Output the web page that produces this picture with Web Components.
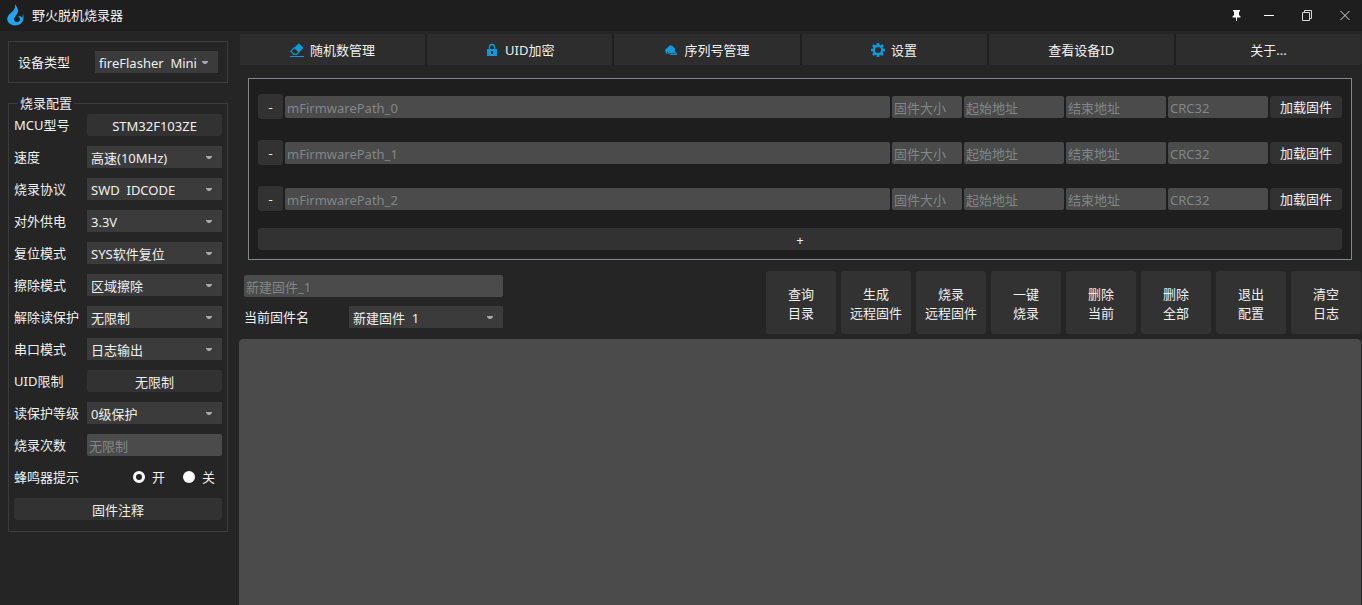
<!DOCTYPE html>
<html lang="zh-CN">
<head>
<meta charset="utf-8">
<title>野火脱机烧录器</title>
<style>
  html, body { height: 100%; }
  body {
    margin: 0; background: #252525; color: #f0f0f0;
    font: 13px/20px "Noto Sans", "Noto Sans CJK SC", sans-serif;
    --button: #323232; --combo: #3b3b3b; --field: #4b4b4b; --line: #3c3c3c; --hint: #7f8787;
  }
</style>
</head>
<body>
<flasher-app></flasher-app>
<script>
const base = `*{box-sizing:border-box} button,input,select{font:inherit;color:inherit;margin:0;outline:0}`;
const define = (name, css, html) => customElements.define(name, class extends HTMLElement {
  constructor() {
    super();
    const t = document.createElement('template');
    const body = typeof html === 'function' ? html(this) : html;
    t.innerHTML = `<style>${base}${css}</style>${body}`;
    this.attachShadow({ mode: 'open' }).append(t.content.cloneNode(true));
  }
});

define('ui-button', `
  :host{display:block;height:22px}
  button{display:block;width:100%;height:100%;padding:2px 0 0;border:0;border-radius:3px;background:var(--button);line-height:19px;text-align:center;white-space:nowrap}
`, `<button type="button"><slot></slot></button>`);

define('ui-field', `
  :host{display:block;height:22px;min-width:0}
  input{display:block;width:100%;height:100%;padding:2px 2px 0;border:0;border-radius:2px;background:var(--field)}
  input::placeholder{color:var(--hint);opacity:1}
`, el => `<input type="text" placeholder="${el.getAttribute('hint')}" aria-label="${el.getAttribute('label') || el.getAttribute('hint')}">`);

define('ui-combo', `
  :host{display:block;position:relative;height:22px}
  select{display:block;appearance:none;width:100%;height:100%;padding:2px 20px 0 4px;border:0;border-radius:0;background:var(--combo)}
  svg{position:absolute;right:9px;top:9px;width:8px;height:5px;pointer-events:none}
`, el => `<select aria-label="${el.getAttribute('label')}"><option>${el.getAttribute('value')}</option></select>
  <svg viewBox="0 0 8 5" aria-hidden="true"><path d="M1 1h6v1L5 4H3L1 2z" fill="#a8a8a8"/></svg>`);

define('config-row', `
  :host{display:flex;align-items:center;height:22px;white-space:nowrap}
  span{flex:1 1 0;min-width:0;overflow:visible}
  div{width:135px}
`, el => `<span>${el.getAttribute('label')}</span><div><slot></slot></div>`);

define('ui-radio', `
  :host{display:block}
  label{display:flex;align-items:center;gap:7px}
  input{appearance:none;width:12px;height:12px;border-radius:50%;background:#fff}
  input:checked{background:#252525;border:3px solid #fff}
`, el => `<label><input type="radio" ${el.hasAttribute('checked') ? 'checked' : ''}><slot></slot></label>`);

define('title-bar', `
  :host{display:flex;align-items:center;height:31px;padding:0 2px 2px 4px;background:#1e1e1e}
  .logo{width:22px;height:22px;margin-right:6px}
  h1{flex:1;margin:0;font-size:13px;font-weight:400}
  nav{display:flex}
  button{display:flex;align-items:center;justify-content:center;width:30px;height:28px;padding:0;border:0;background:none}
  button+button{margin-left:8px}
  button:nth-child(2){margin-left:3px}
  nav svg{width:14px;height:14px}
`, `<svg class="logo" viewBox="0 0 22 22" aria-hidden="true"><path d="M11 0C15 5 14.500 8.500 12.200 11.200C10.400 13.300 9.500 15 10.500 17C12 19 15.500 18.300 16 16C16.400 14 15 12.800 13.600 13.200C15 11.500 17.500 12 18 14C18.800 12.800 19 11.500 18.800 9.500C20.300 13.500 19.600 17.500 16.500 19.800C13 22.300 7.500 21.800 4.800 18.800C2 15.500 3.200 12 6.500 9.300C10 6.400 11.800 4 11 0Z" fill="#22a4ee"/></svg>
  <h1>野火脱机烧录器</h1>
  <nav>
    <button type="button" aria-label="置顶"><svg viewBox="0 0 14 14"><path d="M4 2h7v1.500H10V7l1.500 1.500V9.500H8V13H7V9.500H3.500v-1L5 7V3.500H4z" fill="#fff"/></svg></button>
    <button type="button" aria-label="最小化"><svg viewBox="0 0 14 14"><path d="M2 7.500h10" stroke="#fff"/></svg></button>
    <button type="button" aria-label="还原"><svg viewBox="0 0 14 14"><path d="M2.500 4.500h7v8h-7zM4.500 4.500v-2h7v8h-2" fill="none" stroke="#d8d8d8"/></svg></button>
    <button type="button" aria-label="关闭"><svg viewBox="0 0 14 14"><path d="M2.500 3l9 9m0-9l-9 9" stroke="#d8d8d8"/></svg></button>
  </nav>`);

const icons = {
  eraser: `<path d="M4.500 4.500L0.800 8.200L4 11.400H6.500L10 8" fill="none" stroke="#0a9bdc" stroke-width="1.100"/><path d="M4 5L8.800 0.300L13.500 4.800L8.800 9.500z" fill="#0a9bdc"/><path d="M0 13.500h14" stroke="#0a9bdc"/>`,
  lock: `<path d="M4.500 6V4a2.500 2.500 0 0 1 5 0v2" fill="none" stroke="#0a9bdc" stroke-width="1.300"/><path d="M2 6h10v7H2z" fill="#0a9bdc"/><path d="M7 8v3" stroke="#252525" stroke-width="2"/>`,
  serial: `<path d="M1 7L5.500 2.500H8L11 5.500V8.500L13 10.500V12H7L4 10.500H2z" fill="#0a9bdc"/><path d="M3 9l2 1.500h7" fill="none" stroke="#2d2d2d" stroke-dasharray="2 1"/>`,
  gear: `<g fill="none" stroke="#0a9bdc"><circle cx="7" cy="7" r="4.200" stroke-width="2.400"/><path d="M7 0v2.500M7 11.500V14M0 7h2.500M11.500 7H14M2 2l2 2M10 10l2 2M12 2l-2 2M4 10l-2 2" stroke-width="2.600"/></g>`
};
define('tab-button', `
  :host{display:block;flex:1 1 0;min-width:0}
  button{display:flex;align-items:center;justify-content:center;gap:6px;width:100%;height:31px;padding:0;border:0;background:#2d2d2d}
  svg{width:14px;height:14px}
`, el => `<button type="button">${el.getAttribute('icon') ? `<svg viewBox="0 0 14 14" aria-hidden="true">${icons[el.getAttribute('icon')]}</svg>` : ''}<span><slot></slot></span></button>`);

define('firmware-row', `
  :host{display:grid;grid-template-columns:25px minmax(0,1fr) 70px 100px 100px 100px 72px;gap:2px;align-items:center}
  .minus{height:25px}
`, el => `<ui-button class="minus">-</ui-button><ui-field hint="mFirmwarePath_${el.getAttribute('index')}"></ui-field><ui-field hint="固件大小"></ui-field><ui-field hint="起始地址"></ui-field><ui-field hint="结束地址"></ui-field><ui-field hint="CRC32"></ui-field><ui-button>加载固件</ui-button>`);

define('side-bar', `
  :host{display:block}
  .device{display:flex;align-items:center;justify-content:space-between;height:42px;padding:0 9px;border:1px solid var(--line)}
  .device ui-combo{width:123px}
  fieldset{display:flex;flex-direction:column;gap:10px;min-width:0;margin:10px 0 0;padding:1px 5px 11px;border:1px solid var(--line)}
  legend{margin-left:4px;padding:0 2px;line-height:20px}
  .radios{display:flex;gap:18px;justify-content:flex-end;padding-right:7px}
`, `<div class="device"><span>设备类型</span><ui-combo label="设备类型" value="fireFlasher&amp;nbsp; Mini"></ui-combo></div>
  <fieldset><legend>烧录配置</legend>
    <config-row label="MCU型号"><ui-button>STM32F103ZE</ui-button></config-row>
    <config-row label="速度"><ui-combo label="速度" value="高速(10MHz)"></ui-combo></config-row>
    <config-row label="烧录协议"><ui-combo label="烧录协议" value="SWD&amp;nbsp; IDCODE"></ui-combo></config-row>
    <config-row label="对外供电"><ui-combo label="对外供电" value="3.3V"></ui-combo></config-row>
    <config-row label="复位模式"><ui-combo label="复位模式" value="SYS软件复位"></ui-combo></config-row>
    <config-row label="擦除模式"><ui-combo label="擦除模式" value="区域擦除"></ui-combo></config-row>
    <config-row label="解除读保护"><ui-combo label="解除读保护" value="无限制"></ui-combo></config-row>
    <config-row label="串口模式"><ui-combo label="串口模式" value="日志输出"></ui-combo></config-row>
    <config-row label="UID限制"><ui-button>无限制</ui-button></config-row>
    <config-row label="读保护等级"><ui-combo label="读保护等级" value="0级保护"></ui-combo></config-row>
    <config-row label="烧录次数"><ui-field label="烧录次数" hint="无限制"></ui-field></config-row>
    <config-row label="蜂鸣器提示"><div class="radios"><ui-radio checked>开</ui-radio><ui-radio>关</ui-radio></div></config-row>
    <ui-button>固件注释</ui-button>
  </fieldset>`);

define('action-bar', `
  :host{display:flex;justify-content:space-between;margin:11px 0 5px 5px}
  .name{width:259px;padding-top:4px}
  .current{display:flex;align-items:center;justify-content:space-between;margin-top:9px}
  .current ui-combo{width:154px}
  .actions{display:flex;gap:5px}
  .actions ui-button{width:70px;height:63px}
`, `<div class="name"><ui-field hint="新建固件_1"></ui-field><div class="current"><span>当前固件名</span><ui-combo label="当前固件名" value="新建固件&amp;nbsp; 1"></ui-combo></div></div>
  <div class="actions">${[['查询','目录'],['生成','远程固件'],['烧录','远程固件'],['一键','烧录'],['删除','当前'],['删除','全部'],['退出','配置'],['清空','日志']].map(a => `<ui-button>${a[0]}<br>${a[1]}</ui-button>`).join('')}</div>`);

define('work-area', `
  :host{display:flex;flex-direction:column;min-width:0}
  nav{display:flex;gap:2px;margin:3px 0 13px 1px;background:#202020}
  section{display:flex;flex-direction:column;margin:0 9px;padding:15px 9px 9px;border:1px solid #84868f;background:#1e1e1e}
  firmware-row{margin-bottom:21px}
  firmware-row:nth-of-type(3){margin-bottom:17px}
  output{display:block;flex:1;border-radius:4px 4px 0 0;background:var(--field)}
`, `<nav><tab-button icon="eraser">随机数管理</tab-button><tab-button icon="lock">UID加密</tab-button><tab-button icon="serial">序列号管理</tab-button><tab-button icon="gear">设置</tab-button><tab-button>查看设备ID</tab-button><tab-button>关于...</tab-button></nav>
  <section><firmware-row index="0"></firmware-row><firmware-row index="1"></firmware-row><firmware-row index="2"></firmware-row><ui-button>+</ui-button></section>
  <action-bar></action-bar>
  <output aria-label="日志"></output>`);

define('flasher-app', `
  :host{display:flex;flex-direction:column;min-height:100%}
  main{flex:1;display:grid;grid-template-columns:220px minmax(0,1fr);gap:11px;padding:0 1px 0 8px}
  side-bar{padding-top:10px}
`, `<title-bar></title-bar><main><side-bar></side-bar><work-area></work-area></main>`);
</script>
</body>
</html>
